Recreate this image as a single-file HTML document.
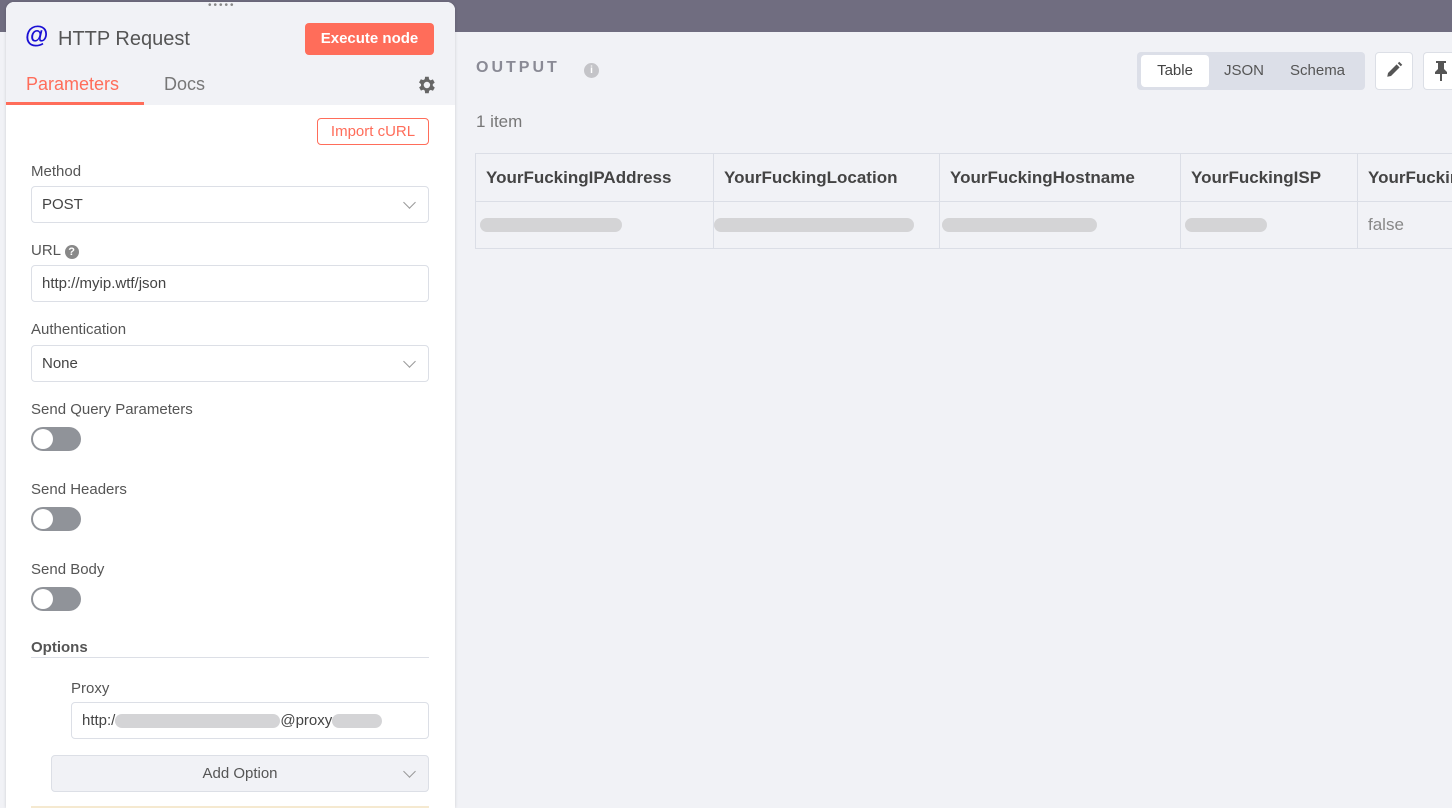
<!DOCTYPE html>
<html><head><meta charset="utf-8"><style>
*{box-sizing:border-box;margin:0;padding:0}
html,body{width:1452px;height:808px;overflow:hidden}
body{background:#f1f2f6;font-family:"Liberation Sans",sans-serif;position:relative;color:#555}
.a{position:absolute}
.wrap{left:0;top:0;width:1452px;height:808px;overflow:hidden}
.top{left:0;top:0;width:1452px;height:32px;background:#706d80}
.panel{left:6px;top:2px;width:449px;height:806px;background:#fff;border-radius:8px 8px 0 0;box-shadow:0 0 3px rgba(0,0,0,.15);overflow:hidden}
.hdr{left:0;top:0;width:449px;height:103px;background:#f1f2f6}
.lbl{font-size:15px;color:#555}
.inp{border:1px solid #dcdfe6;border-radius:4px;background:#fff;height:37px;font-size:15px;padding:9px 10px;color:#444}
.tog{width:50px;height:24px;border-radius:12px;background:#909399}
.tog:after{content:"";position:absolute;left:2px;top:2px;width:20px;height:20px;border-radius:50%;background:#fff}
.chev{position:absolute;right:14px;top:11px;width:9px;height:9px;border-right:1.5px solid #999;border-bottom:1.5px solid #999;transform:rotate(45deg)}
.blur{background:#d4d4d6;border-radius:8px;height:14px}
table{table-layout:fixed}
th,td{border:1px solid #dbdee6;text-align:left;padding:0 10px;white-space:nowrap;overflow:hidden}
th{font-size:17px;color:#444;height:48px;background:#f1f2f6}
td{height:47px;font-size:17px;color:#888}
</style></head><body>
<div class="a wrap">
<div class="a top"></div>
<div class="a panel">
 <div class="a hdr"></div>
 <div class="a" style="left:202px;top:-2px;font-size:10px;color:#888;letter-spacing:2px">•••••</div>
 <div class="a" style="left:19px;top:20px;font-size:24px;font-weight:bold;color:#1a0fd4">@</div>
 <div class="a" style="left:52px;top:26px;font-size:20px;color:#555">HTTP Request</div>
 <div class="a" style="left:299px;top:21px;width:129px;height:32px;background:#ff6d5a;border-radius:4px;color:#fff;font-size:15px;font-weight:bold;text-align:center;line-height:32px">Execute node</div>
 <div class="a" style="left:20px;top:72px;font-size:18px;color:#ff6d5a">Parameters</div>
 <div class="a" style="left:0;top:100px;width:138px;height:3px;background:#ff6d5a"></div>
 <div class="a" style="left:158px;top:72px;font-size:18px;color:#777">Docs</div>
 <svg class="a" style="left:409px;top:72px" width="22" height="22" viewBox="0 0 24 24"><path fill="#666" d="M19.4 13a7.5 7.5 0 000-2l2.1-1.6-2-3.5-2.5 1a7 7 0 00-1.7-1L15 3h-4l-.4 2.7a7 7 0 00-1.7 1l-2.5-1-2 3.5L6.6 11a7.5 7.5 0 000 2l-2.1 1.6 2 3.5 2.5-1a7 7 0 001.7 1L11 21h4l.4-2.7a7 7 0 001.7-1l2.5 1 2-3.5zM13 15.5a3.5 3.5 0 110-7 3.5 3.5 0 010 7z"/></svg>
 <div class="a" style="left:311px;top:116px;width:112px;height:27px;border:1px solid #ff6d5a;border-radius:4px;color:#ff6d5a;font-size:15px;text-align:center;line-height:25px">Import cURL</div>
 <div class="a lbl" style="left:25px;top:161px">Method</div>
 <div class="a inp" style="left:25px;top:184px;width:398px">POST<span class="chev"></span></div>
 <div class="a lbl" style="left:25px;top:240px">URL <span style="display:inline-block;width:14px;height:14px;border-radius:50%;background:#888;color:#fff;font-size:11px;text-align:center;line-height:14px;font-weight:bold">?</span></div>
 <div class="a inp" style="left:25px;top:263px;width:398px">http://myip.wtf/json</div>
 <div class="a lbl" style="left:25px;top:319px">Authentication</div>
 <div class="a inp" style="left:25px;top:343px;width:398px">None<span class="chev"></span></div>
 <div class="a lbl" style="left:25px;top:399px">Send Query Parameters</div>
 <div class="a tog" style="left:25px;top:425px"></div>
 <div class="a lbl" style="left:25px;top:479px">Send Headers</div>
 <div class="a tog" style="left:25px;top:505px"></div>
 <div class="a lbl" style="left:25px;top:559px">Send Body</div>
 <div class="a tog" style="left:25px;top:585px"></div>
 <div class="a" style="left:25px;top:637px;font-size:15px;font-weight:bold;color:#555">Options</div>
 <div class="a" style="left:25px;top:655px;width:398px;height:1px;background:#dcdfe6"></div>
 <div class="a lbl" style="left:65px;top:678px">Proxy</div>
 <div class="a inp" style="left:65px;top:700px;width:358px">http:/<span style="display:inline-block;width:165px;height:14px;background:#d4d4d6;border-radius:7px;vertical-align:middle"></span>@proxy<span style="display:inline-block;width:50px;height:14px;background:#d4d4d6;border-radius:7px;vertical-align:middle"></span></div>
 <div class="a" style="left:45px;top:753px;width:378px;height:37px;border:1px solid #dcdfe6;border-radius:4px;background:#f1f2f6;font-size:15px;text-align:center;line-height:35px;color:#555">Add Option<span class="chev"></span></div>
 <div class="a" style="left:25px;top:804px;width:398px;height:2px;background:#f5e9d0"></div>
</div>
<div class="a" style="left:476px;top:59px;font-size:16px;font-weight:bold;letter-spacing:3px;color:#8a8a95">OUTPUT</div>
<div class="a" style="left:584px;top:63px;width:15px;height:15px;border-radius:50%;background:#c4c4c8;color:#fff;font-size:10px;font-weight:bold;text-align:center;line-height:15px">i</div>
<div class="a" style="left:1137px;top:52px;width:228px;height:38px;background:#dcdfe8;border-radius:4px"></div>
<div class="a" style="left:1141px;top:55px;width:68px;height:32px;background:#fff;border-radius:4px;font-size:15px;color:#444;text-align:center;line-height:32px">Table</div>
<div class="a" style="left:1224px;top:55px;font-size:15px;color:#555;line-height:32px">JSON</div>
<div class="a" style="left:1290px;top:55px;font-size:15px;color:#555;line-height:32px">Schema</div>
<div class="a" style="left:1375px;top:52px;width:38px;height:38px;border:1px solid #dcdfe6;border-radius:4px;background:#fff"></div>
<svg class="a" style="left:1385px;top:61px" width="18" height="18" viewBox="0 0 24 24"><path fill="#555" d="M3 21l1-5L15.5 4.5l4 4L8 20zM17 3l2-2 4 4-2 2z"/></svg>
<div class="a" style="left:1423px;top:52px;width:29px;height:38px;border:1px solid #dcdfe6;border-right:none;border-radius:4px 0 0 4px;background:#fff"></div>
<svg class="a" style="left:1433px;top:61px" width="16" height="20" viewBox="0 0 16 20"><path fill="#555" d="M3 0h10v2h-2v6l3 3v2H9v7H7v-7H2v-2l3-3V2H3z"/></svg>
<div class="a" style="left:476px;top:112px;font-size:17px;color:#777">1 item</div>
<div class="a" style="left:475px;top:153px;width:977px;height:100px;overflow:hidden">
<table style="border-collapse:collapse;width:1082px">
<colgroup><col style="width:238px"><col style="width:226px"><col style="width:241px"><col style="width:177px"><col style="width:200px"></colgroup>
<tr><th>YourFuckingIPAddress</th><th>YourFuckingLocation</th><th>YourFuckingHostname</th><th>YourFuckingISP</th><th>YourFuckingTorExit</th></tr>
<tr><td style="padding-left:4px"><div class="blur" style="width:142px"></div></td><td style="padding-left:0"><div class="blur" style="width:200px"></div></td><td style="padding-left:2px"><div class="blur" style="width:155px"></div></td><td style="padding-left:4px"><div class="blur" style="width:82px"></div></td><td>false</td></tr>
</table>
</div>
</div>
</body></html>
